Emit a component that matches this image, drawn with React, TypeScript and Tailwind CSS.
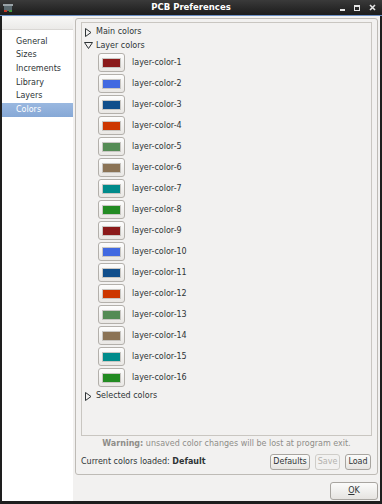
import React from "react";

const font = { fontFamily: '"DejaVu Sans", "Liberation Sans", sans-serif' };

const palette = [
  "#8b1a1a",
  "#4169e1",
  "#104e8b",
  "#cd3700",
  "#548b54",
  "#8b7355",
  "#008b8b",
  "#228b22",
];

const layers = Array.from({ length: 16 }, (_, i) => ({
  name: `layer-color-${i + 1}`,
  color: palette[i % 8],
}));

const sections = ["General", "Sizes", "Increments", "Library", "Layers", "Colors"];

const Arrow = ({ open }: { open?: boolean }) =>
  open ? (
    <svg width="9" height="7" viewBox="0 0 9 7" className="shrink-0">
      <path d="M0.5 0.5 L8.5 0.5 L4.5 6.5 Z" fill="none" stroke="#2e3436" strokeWidth="1" />
    </svg>
  ) : (
    <svg width="7" height="9" viewBox="0 0 7 9" className="shrink-0">
      <path d="M0.5 0.5 L6 4.5 L0.5 8.5 Z" fill="none" stroke="#2e3436" strokeWidth="1" />
    </svg>
  );

const Btn = ({
  children,
  disabled,
  className = "",
}: {
  children: React.ReactNode;
  disabled?: boolean;
  className?: string;
}) => (
  <div
    className={`h-[16px] flex items-center justify-center rounded-[3px] border ${
      disabled
        ? "border-[#cfcdc9] text-[#b4b2ae] bg-[#f2f1f0]"
        : "border-[#a8a5a0] text-[#2e3436] bg-gradient-to-b from-[#fbfbfa] to-[#e6e4e1]"
    } ${className}`}
  >
    {children}
  </div>
);

const SwatchRow = ({ name, color }: { name: string; color: string }) => (
  <div className="h-[21px] flex items-center pl-[16px]">
    <div className="w-[27px] h-[19px] rounded-[3px] border border-[#b3b0ab] bg-gradient-to-b from-[#fdfdfd] to-[#e9e7e4] flex items-center justify-center">
      <div
        className="w-[19px] h-[10px] border border-[#c8c6c2]"
        style={{ backgroundColor: color }}
      />
    </div>
    <span className="ml-[7px] text-[8px] text-[#2e3436]">{name}</span>
  </div>
);

export default function App() {
  return (
    <div
      className="w-[382px] h-[504px] bg-[#1e1e1e] flex flex-col overflow-hidden"
      style={font}
    >
      {/* title bar */}
      <div className="h-[15px] shrink-0 bg-gradient-to-b from-[#3a3a3a] to-[#1c1c1c] flex items-center relative">
        <svg width="10" height="8" viewBox="0 0 10 8" className="absolute left-[3px] top-[4px]">
          <rect x="0" y="0" width="10" height="2" fill="#9aa3a8" />
          <rect x="1" y="2" width="8" height="5" fill="#5b6a70" />
          <rect x="1" y="6" width="3" height="2" fill="#c23a2a" />
          <rect x="6" y="6" width="3" height="2" fill="#3f9a3f" />
        </svg>
        <div className="w-full text-center text-[8.5px] font-bold text-white leading-none">
          PCB Preferences
        </div>
        <div className="absolute right-[6px] top-[4px] flex items-center gap-[9px]">
          <div className="w-[5px] h-[2px] bg-[#e6e6e6] mt-[5px]" />
          <div className="w-[6px] h-[6px] border border-[#e6e6e6] border-t-2" />
          <svg width="7" height="7" viewBox="0 0 7 7">
            <path d="M1 1 L6 6 M6 1 L1 6" stroke="#e6e6e6" strokeWidth="1.6" />
          </svg>
        </div>
      </div>
      <div className="h-[1px] shrink-0 bg-[#6b8fc4]" />

      {/* body */}
      <div className="flex-1 mx-[2px] mb-[3px] bg-[#f2f1f0] flex">
        {/* sidebar */}
        <div className="w-[71px] mt-[1px] bg-white flex flex-col">
          <div className="h-[13px] bg-gradient-to-b from-[#f7f7f6] to-[#ebeae8] border-b border-[#d9d7d4]" />
          <div className="pt-[5px] text-[8px]">
            {sections.map((s) => (
              <div
                key={s}
                className={`h-[13.6px] flex items-center pl-[14px] ${
                  s === "Colors"
                    ? "bg-gradient-to-b from-[#9ab8e0] to-[#86a8d6] text-white"
                    : "text-[#2e3436]"
                }`}
              >
                {s}
              </div>
            ))}
          </div>
        </div>

        {/* main panel */}
        <div className="flex-1 ml-[2px] flex flex-col pt-[2px]">
          <div className="h-[457px] mr-[2px] rounded-[3px] border border-[#bebbb6] flex flex-col px-[5px] pt-[3px]">
            <div className="h-[414px] border border-[#c9c6c1] text-[8px] text-[#2e3436]">
              <div className="h-[14px] mt-[2px] flex items-center gap-[4px] pl-[3px]">
                <Arrow />
                <span>Main colors</span>
              </div>
              <div className="h-[13px] flex items-center gap-[3px] pl-[2px]">
                <Arrow open />
                <span>Layer colors</span>
              </div>
              {layers.map((l) => (
                <SwatchRow key={l.name} name={l.name} color={l.color} />
              ))}
              <div className="h-[14px] mt-[1px] flex items-center gap-[4px] pl-[3px]">
                <Arrow />
                <span>Selected colors</span>
              </div>
            </div>
            <div className="h-[14px] mt-[1px] flex items-center justify-center text-[8px] text-[#8f8d89]">
              <span className="font-bold">Warning:</span>
              <span>&nbsp;unsaved color changes will be lost at program exit.</span>
            </div>
            <div className="h-[22px] flex items-center text-[8px] text-[#2e3436]">
              <span>
                Current colors loaded: <span className="font-bold">Default</span>
              </span>
              <div className="ml-auto flex items-center gap-[5px] mr-[1px]">
                <Btn className="w-[40px]">Defaults</Btn>
                <Btn className="w-[25px]" disabled>
                  Save
                </Btn>
                <Btn className="w-[26px]">Load</Btn>
              </div>
            </div>
          </div>
          <div className="flex justify-end mt-[7px] mr-[2px]">
            <Btn className="w-[48px] h-[18px] text-[8px]">
              <span>
                <span className="underline">O</span>K
              </span>
            </Btn>
          </div>
        </div>
      </div>
    </div>
  );
}
